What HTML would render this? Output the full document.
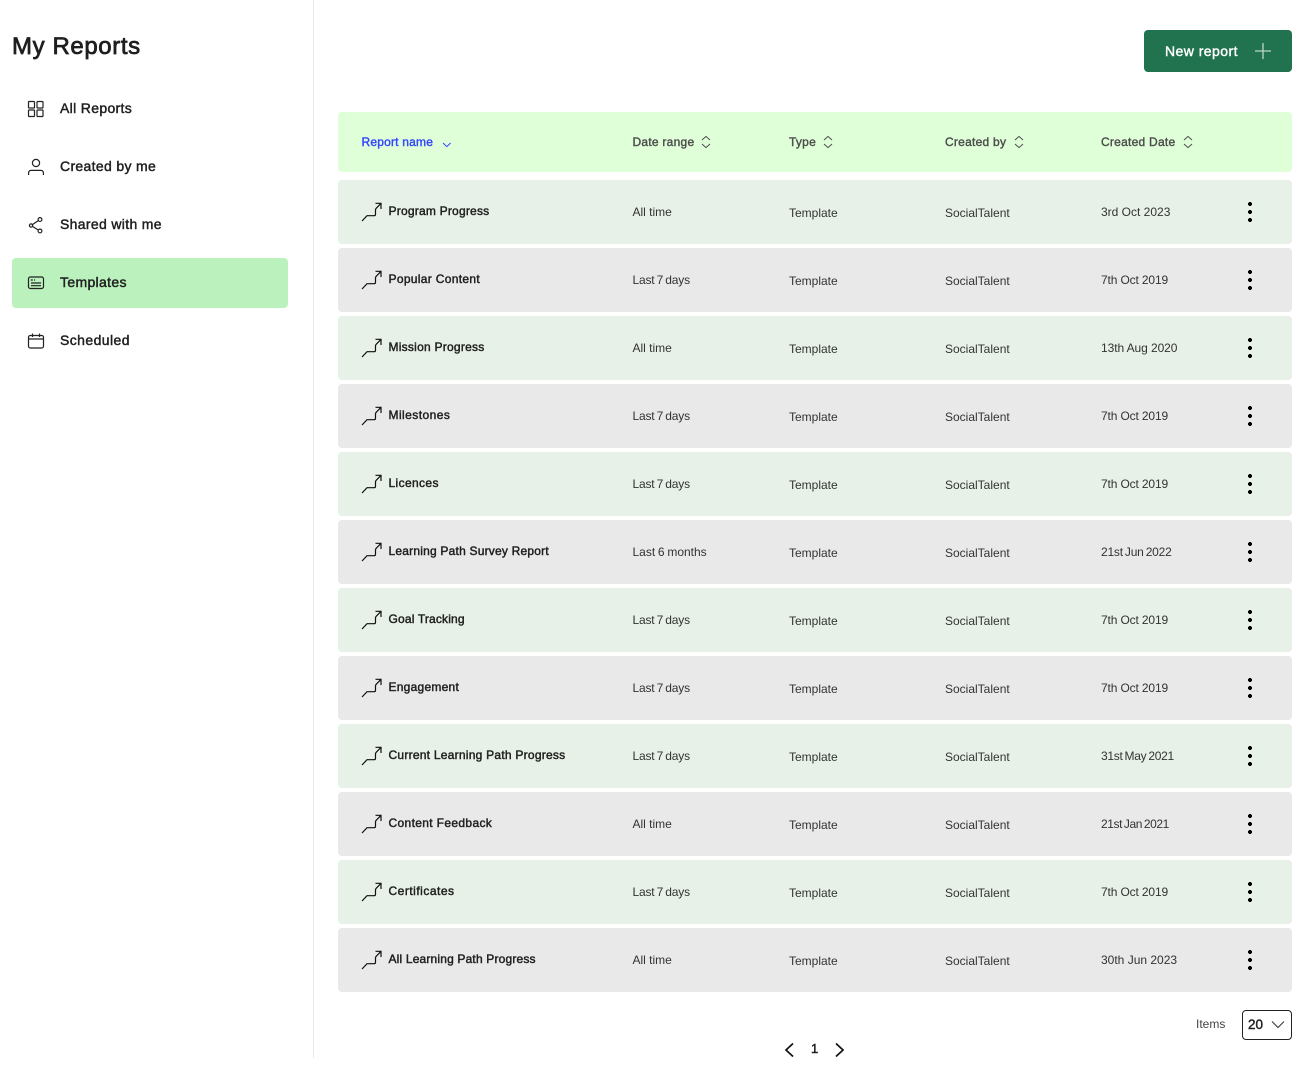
<!DOCTYPE html>
<html><head><meta charset="utf-8"><title>My Reports</title>
<style>
*{box-sizing:border-box}
html,body{margin:0;padding:0;width:1312px;height:1082px;background:#fff;overflow:hidden;font-family:"Liberation Sans",sans-serif;color:#1f1f1f}
.a{position:absolute;white-space:nowrap}
.side{position:absolute;left:313px;top:0;width:1px;height:1058px;background:#e8e8e8}
h1{position:absolute;margin:0;left:12px;top:33px;font-size:24px;line-height:28px;font-weight:400;-webkit-text-stroke:.75px #1f1f1f;letter-spacing:.6px}
.nav{position:absolute;left:60px;font-size:14px;line-height:16px;-webkit-text-stroke:.45px #1f1f1f;letter-spacing:.33px}
.ni{position:absolute;left:26px;width:20px;height:20px;fill:none;stroke:#222;stroke-width:1.2}
.act{position:absolute;left:12px;top:258px;width:276px;height:50px;background:#bbf1bd;border-radius:4px}
.btn{position:absolute;left:1144px;top:30px;width:148px;height:42px;background:#217350;border-radius:4px;color:#fff;font-size:14px;line-height:43px;padding-left:21px;-webkit-text-stroke:.4px #fff;letter-spacing:.45px}
.btn svg{position:absolute;left:110px;top:12px}
.head{position:absolute;left:338px;top:112px;width:954px;height:60px;background:#dfffd8;border-radius:4px}
.h{position:absolute;top:22px;font-size:12px;line-height:16px;color:#4d4d4d;-webkit-text-stroke:.4px #4d4d4d;white-space:nowrap;letter-spacing:.25px}
.h svg{position:absolute;top:1px;fill:none;stroke:#4d4d4d;stroke-width:1}
.r{position:absolute;left:338px;width:954px;height:64px;border-radius:4px;background:#e7f1e7}
.r.g{background:#e9e9e9}
.r svg.t{position:absolute;left:23px;top:20px;width:22px;height:22px;fill:none;stroke:#111;stroke-width:1.2}
.n,.d,.y,.c,.w{position:absolute;font-size:12px;line-height:16px;white-space:nowrap}
.n{left:50.5px;top:23px;color:#1f1f1f;-webkit-text-stroke:.45px #1f1f1f;letter-spacing:.25px}
.d{left:294.5px;top:24px;color:#333}
.d.l{word-spacing:-1px;letter-spacing:-.18px}
.y{left:451px;top:25px;color:#333}
.c{left:607px;top:25px;color:#333;letter-spacing:0}
.w{left:763px;top:24px;color:#333}
.w.s{letter-spacing:-.14px}
.k{position:absolute;left:910px;top:22px;width:4px;height:20px;
background:radial-gradient(circle at 2px 2px,#000 1.9px,transparent 2.1px) 0 0/4px 8px repeat-y}
</style></head>
<body>
<div class="side"></div>
<h1>My Reports</h1>
<svg class="ni" style="top:99px" viewBox="0 0 20 20"><rect x="2.5" y="2.5" width="6" height="6.5" rx=".8"/><rect x="11" y="2.5" width="6" height="6.5" rx=".8"/><rect x="2.5" y="11" width="6" height="6.5" rx=".8"/><rect x="11" y="11" width="6" height="6.5" rx=".8"/></svg>
<div class="nav" style="top:100px">All Reports</div>
<svg class="ni" style="top:157px" viewBox="0 0 20 20"><circle cx="10" cy="6" r="3.6"/><path d="M2.6 18v-2.2a2.4 2.4 0 0 1 2.4-2.400h10a2.400 2.400 0 0 1 2.400 2.400V18"/></svg>
<div class="nav" style="top:158px">Created by me</div>
<svg class="ni" style="top:215px" viewBox="0 0 20 20"><circle cx="14" cy="4.5" r="1.9"/><circle cx="14" cy="16" r="1.9"/><circle cx="5" cy="10.5" r="1.6"/><path d="M12.3 5.6 6.4 9.6M6.4 11.4l5.9 3.6"/></svg>
<div class="nav" style="top:216px">Shared with me</div>
<div class="act"></div>
<svg class="ni" style="top:273px" viewBox="0 0 20 20"><rect x="2.5" y="4" width="15" height="11.5" rx="1.8"/><path d="M4.8 7h2M8 7h1M5 10h10M5 12.7h10"/></svg>
<div class="nav" style="top:274px">Templates</div>
<svg class="ni" style="top:331px" viewBox="0 0 20 20"><rect x="2.5" y="4.5" width="15" height="12.5" rx="1.8"/><path d="M2.500 8h15M6.500 2.500v3.500M13.500 2.500v3.500"/></svg>
<div class="nav" style="top:332px;letter-spacing:.42px">Scheduled</div>

<div class="btn">New report<svg width="18" height="18" viewBox="0 0 18 18" fill="none" stroke="#b9d6c8" stroke-width="1.3"><path d="M9 1v16M1 9h16"/></svg></div>

<div class="head">
<div class="h" style="left:23.5px;color:#3344ff;-webkit-text-stroke:.4px #3344ff;letter-spacing:.2px">Report name<svg style="left:79px;top:3px;stroke:#3344ff" width="12" height="12" viewBox="0 0 12 12"><path d="M2 6l3.800 3.600L9.600 6"/></svg></div>
<div class="h" style="left:294.5px">Date range<svg style="left:67px" width="12" height="14" viewBox="0 0 12 14"><path d="M2 5l4-3.600L10 5M2 9l4 3.600L10 9"/></svg></div>
<div class="h" style="left:451px">Type<svg style="left:33px" width="12" height="14" viewBox="0 0 12 14"><path d="M2 5l4-3.600L10 5M2 9l4 3.600L10 9"/></svg></div>
<div class="h" style="left:607px">Created by<svg style="left:67.5px" width="12" height="14" viewBox="0 0 12 14"><path d="M2 5l4-3.600L10 5M2 9l4 3.600L10 9"/></svg></div>
<div class="h" style="left:763px">Created Date<svg style="left:81px" width="12" height="14" viewBox="0 0 12 14"><path d="M2 5l4-3.600L10 5M2 9l4 3.600L10 9"/></svg></div>
</div>

<div class="r" style="top:180px"><svg class="t" viewBox="0 0 22 22"><path d="M1 21l5-5.300h7q1.500 0 1.500-1.500V10q0-1 .8-1.800L20 3.300M14.500 3.300H20V9"/></svg><div class="n" style="letter-spacing:.22px">Program Progress</div><div class="d">All time</div><div class="y">Template</div><div class="c">SocialTalent</div><div class="w">3rd Oct 2023</div><div class="k"></div></div>
<div class="r g" style="top:248px"><svg class="t" viewBox="0 0 22 22"><path d="M1 21l5-5.300h7q1.500 0 1.500-1.500V10q0-1 .8-1.800L20 3.300M14.500 3.300H20V9"/></svg><div class="n" style="letter-spacing:.32px">Popular Content</div><div class="d l">Last 7 days</div><div class="y">Template</div><div class="c">SocialTalent</div><div class="w s">7th Oct 2019</div><div class="k"></div></div>
<div class="r" style="top:316px"><svg class="t" viewBox="0 0 22 22"><path d="M1 21l5-5.300h7q1.500 0 1.500-1.500V10q0-1 .8-1.800L20 3.300M14.500 3.300H20V9"/></svg><div class="n">Mission Progress</div><div class="d">All time</div><div class="y">Template</div><div class="c">SocialTalent</div><div class="w" style="letter-spacing:-.08px">13th Aug 2020</div><div class="k"></div></div>
<div class="r g" style="top:384px"><svg class="t" viewBox="0 0 22 22"><path d="M1 21l5-5.300h7q1.500 0 1.500-1.500V10q0-1 .8-1.800L20 3.300M14.500 3.300H20V9"/></svg><div class="n" style="letter-spacing:.45px">Milestones</div><div class="d l">Last 7 days</div><div class="y">Template</div><div class="c">SocialTalent</div><div class="w s">7th Oct 2019</div><div class="k"></div></div>
<div class="r" style="top:452px"><svg class="t" viewBox="0 0 22 22"><path d="M1 21l5-5.300h7q1.500 0 1.500-1.500V10q0-1 .8-1.800L20 3.300M14.500 3.300H20V9"/></svg><div class="n" style="letter-spacing:.37px">Licences</div><div class="d l">Last 7 days</div><div class="y">Template</div><div class="c">SocialTalent</div><div class="w s">7th Oct 2019</div><div class="k"></div></div>
<div class="r g" style="top:520px"><svg class="t" viewBox="0 0 22 22"><path d="M1 21l5-5.300h7q1.500 0 1.500-1.500V10q0-1 .8-1.800L20 3.300M14.500 3.300H20V9"/></svg><div class="n" style="letter-spacing:.21px">Learning Path Survey Report</div><div class="d" style="word-spacing:-.6px">Last 6 months</div><div class="y">Template</div><div class="c">SocialTalent</div><div class="w" style="word-spacing:-1px;letter-spacing:-.22px">21st Jun 2022</div><div class="k"></div></div>
<div class="r" style="top:588px"><svg class="t" viewBox="0 0 22 22"><path d="M1 21l5-5.300h7q1.500 0 1.500-1.500V10q0-1 .8-1.800L20 3.300M14.500 3.300H20V9"/></svg><div class="n" style="letter-spacing:.17px">Goal Tracking</div><div class="d l">Last 7 days</div><div class="y">Template</div><div class="c">SocialTalent</div><div class="w s">7th Oct 2019</div><div class="k"></div></div>
<div class="r g" style="top:656px"><svg class="t" viewBox="0 0 22 22"><path d="M1 21l5-5.300h7q1.500 0 1.500-1.500V10q0-1 .8-1.800L20 3.300M14.500 3.300H20V9"/></svg><div class="n">Engagement</div><div class="d l">Last 7 days</div><div class="y">Template</div><div class="c">SocialTalent</div><div class="w s">7th Oct 2019</div><div class="k"></div></div>
<div class="r" style="top:724px"><svg class="t" viewBox="0 0 22 22"><path d="M1 21l5-5.300h7q1.500 0 1.500-1.500V10q0-1 .8-1.800L20 3.300M14.500 3.300H20V9"/></svg><div class="n">Current Learning Path Progress</div><div class="d l">Last 7 days</div><div class="y">Template</div><div class="c">SocialTalent</div><div class="w" style="word-spacing:-1px;letter-spacing:-.3px">31st May 2021</div><div class="k"></div></div>
<div class="r g" style="top:792px"><svg class="t" viewBox="0 0 22 22"><path d="M1 21l5-5.300h7q1.500 0 1.500-1.500V10q0-1 .8-1.800L20 3.300M14.500 3.300H20V9"/></svg><div class="n" style="letter-spacing:.35px">Content Feedback</div><div class="d">All time</div><div class="y">Template</div><div class="c">SocialTalent</div><div class="w" style="word-spacing:-1px;letter-spacing:-.42px">21st Jan 2021</div><div class="k"></div></div>
<div class="r" style="top:860px"><svg class="t" viewBox="0 0 22 22"><path d="M1 21l5-5.300h7q1.500 0 1.500-1.500V10q0-1 .8-1.800L20 3.300M14.500 3.300H20V9"/></svg><div class="n" style="letter-spacing:.5px">Certificates</div><div class="d l">Last 7 days</div><div class="y">Template</div><div class="c">SocialTalent</div><div class="w s">7th Oct 2019</div><div class="k"></div></div>
<div class="r g" style="top:928px"><svg class="t" viewBox="0 0 22 22"><path d="M1 21l5-5.300h7q1.500 0 1.500-1.500V10q0-1 .8-1.800L20 3.300M14.500 3.300H20V9"/></svg><div class="n" style="letter-spacing:.17px">All Learning Path Progress</div><div class="d">All time</div><div class="y">Template</div><div class="c">SocialTalent</div><div class="w">30th Jun 2023</div><div class="k"></div></div>

<div class="a" style="left:1196px;top:1016px;font-size:12px;line-height:16px;color:#444">Items</div>
<div class="a" style="left:1242px;top:1010px;width:50px;height:30px;border:1px solid #222;border-radius:4px;font-size:13.5px;line-height:28px;padding-left:5px;-webkit-text-stroke:.45px #1f1f1f">20<svg style="position:absolute;left:28px;top:9px" width="14" height="10" viewBox="0 0 14 10" fill="none" stroke="#333" stroke-width="1"><path d="M1 1.500l6 6 6-6"/></svg></div>
<svg class="a" style="left:783px;top:1042px" width="12" height="16" viewBox="0 0 12 16" fill="none" stroke="#111" stroke-width="1.700"><path d="M10 1.500 3 8l7 6.500"/></svg>
<div class="a" style="left:811px;top:1041px;font-size:13px;line-height:16px;-webkit-text-stroke:.45px #1f1f1f">1</div>
<svg class="a" style="left:834px;top:1042px" width="12" height="16" viewBox="0 0 12 16" fill="none" stroke="#111" stroke-width="1.700"><path d="M2 1.500 9 8l-7 6.500"/></svg>
</body></html>
